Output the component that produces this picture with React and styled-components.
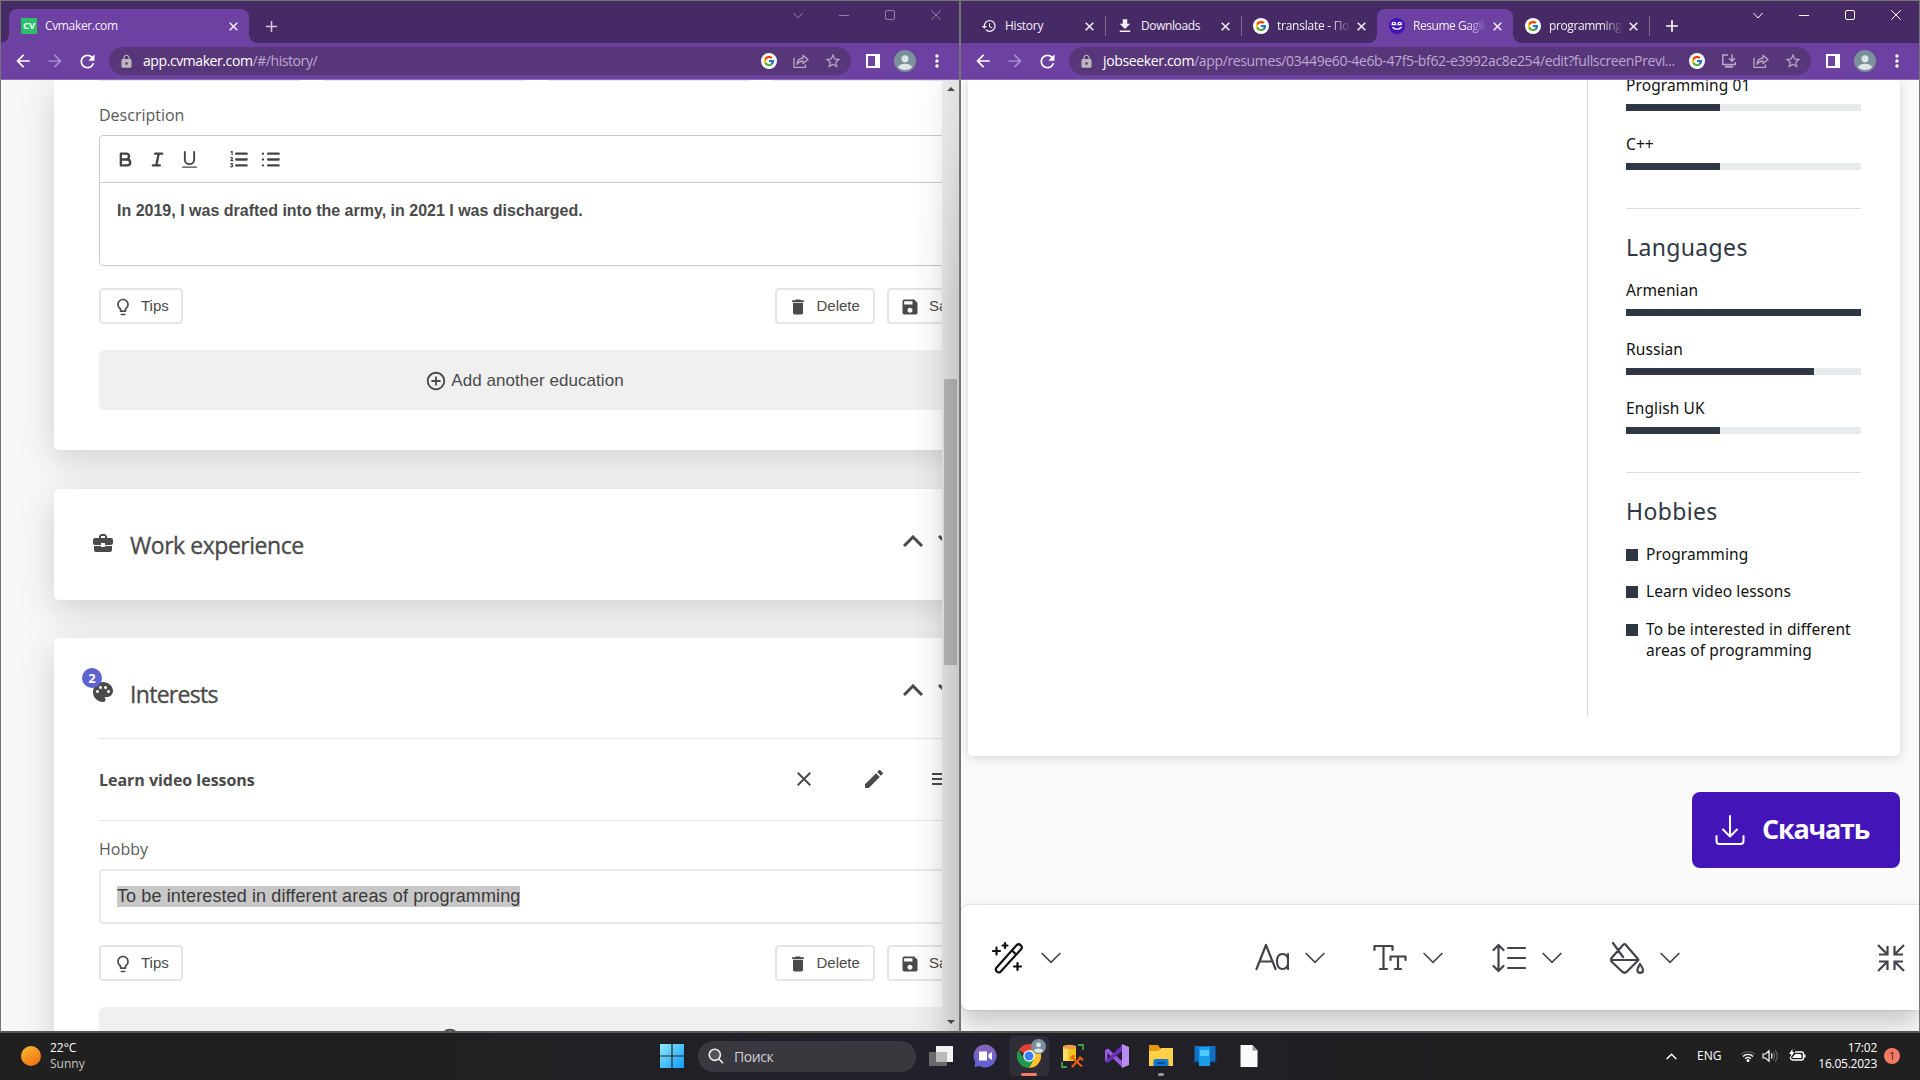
import React from "react";
import styled, { createGlobalStyle, css } from "styled-components";
import {
  MdArrowBack, MdArrowForward, MdRefresh, MdLock, MdStarBorder, MdClose, MdAdd, MdMoreVert,
  MdHistory, MdDownload, MdDelete, MdSave, MdEdit, MdPalette, MdMenu, MdBusinessCenter,
  MdLightbulbOutline, MdAddCircleOutline,
} from "react-icons/md";

const ui = `"Open Sans", "Noto Sans", sans-serif`;
const arial = `"Liberation Sans", Arial, sans-serif`;

const Global = createGlobalStyle`
  * { box-sizing: border-box; }
  body { margin: 0; background: #202020; overflow: hidden; font-family: ${ui}; }
  svg { display: block; flex: none; }
`;

const Desktop = styled.div`
  width: 1920px; height: 1080px; overflow: hidden;
  display: grid; grid-template: 1033px 47px / 960px 960px;
`;
const Window = styled.section`
  display: flex; flex-direction: column; overflow: hidden; min-width: 0;
  border: 1px solid #757575; border-bottom: 2px solid #555858;
`;

/* ---------- browser chrome ---------- */
const TabStrip = styled.header`
  display: flex; height: 42px; flex: none; background: #462a66; padding-left: 8px;
`;
const Tab = styled.div`
  position: relative; display: flex; align-items: center; width: ${p => p.$w || 136}px; height: 34px; margin-top: 8px;
  padding: 0 9px 0 12px; color: #f4eff8; background: ${p => (p.$active ? "#6d41a1" : "transparent")};
  border-radius: 8px 8px 0 0;
  ${p => p.$active && css`
    &::before, &::after { content: ""; position: absolute; bottom: 0; width: 8px; height: 8px; }
    &::before { left: -8px; background: radial-gradient(circle at 0 0, transparent 7.5px, #6d41a1 8px); }
    &::after { right: -8px; background: radial-gradient(circle at 100% 0, transparent 7.5px, #6d41a1 8px); }
  `}
  ${p => p.$sep && css`
    &::after { content: ""; position: absolute; right: -1px; top: 7px; width: 1px; height: 20px; background: #7d6893; }
  `}
`;
const TabIcon = styled.span`
  display: flex; align-items: center; justify-content: center; width: 16px; height: 16px; margin-right: 8px; flex: none;
`;
const TabTitle = styled.span`
  flex: 1; overflow: hidden; white-space: nowrap; font-size: 12px; line-height: 18px; letter-spacing: ${p => p.$ls || 0}px;
  ${p => p.$fade && css`mask-image: linear-gradient(90deg, #000 74%, rgba(0,0,0,.1) 100%);`}
`;
const CloseSlot = styled.span`
  display: flex; margin-left: 5px; width: 14px; justify-content: center; color: #efe9f5;
`;
const CvIcon = styled.span`
  width: 16px; height: 16px; background: #2dbe6c; color: #e9fff2; font: 700 9.5px/16px ${ui}; text-align: center;
`;
const NewTab = styled.span`
  display: flex; align-items: center; height: 34px; margin: 8px 0 0 13px; color: ${p => (p.$dim ? "#cfc4da" : "#fff")};
`;
const Controls = styled.div`
  display: flex; margin-left: auto; height: 28px; color: ${p => (p.$dim ? "#9280a6" : "#fff")};
`;
const Control = styled.span`
  display: flex; align-items: center; justify-content: center; width: 46px;
`;
const NavBar = styled.div`
  display: flex; align-items: center; height: 37px; flex: none; background: #6d41a1; border-bottom: 1px solid #8d68b7; color: #fff;
`;
const NavIcon = styled.span`
  display: flex; justify-content: center; width: 32px; color: ${p => (p.$dim ? "#a88bc9" : "#fff")};
  &:first-child { margin-left: 6px; }
`;
const Omnibox = styled.div`
  display: flex; align-items: center; width: 742px; height: 28px; margin-left: 6px; padding: 0 2px 0 10px;
  border-radius: 14px; background: #57377a;
`;
const Url = styled.div`
  flex: 1; padding-left: 9px; white-space: nowrap; overflow: hidden; font-size: 14px; line-height: 22px; color: #bda9d0;
  letter-spacing: ${p => p.$ls || 0}px;
  b { font-weight: 400; color: #fff; }
`;
const OmniIcon = styled.span`display: flex; justify-content: center; width: 32px; color: #b8a9c8;`;
const BarIcon = styled.span`display: flex; justify-content: center; width: 32px;`;
const BarEnd = styled.div`display: flex; align-items: center; margin-left: 6px;`;

const Google = ({ size = 16 }) => (
  <svg width={size} height={size} viewBox="0 0 16 16">
    <circle cx="8" cy="8" r="8" fill="#fff" />
    <g transform="translate(1.9 1.9) scale(.254)">
      <path fill="#FFC107" d="M43.6 20.1H42V20H24v8h11.3C33.7 32.7 29.2 36 24 36c-6.6 0-12-5.4-12-12s5.400-12 12-12c3.100 0 5.800 1.200 8 3l5.700-5.700C34 6.100 29.300 4 24 4 13 4 4 13 4 24s9 20 20 20 20-9 20-20c0-1.300-.1-2.600-.4-3.900z" />
      <path fill="#FF3D00" d="M6.300 14.700l6.600 4.800C14.700 15.100 19 12 24 12c3.100 0 5.800 1.200 8 3l5.700-5.700C34 6.100 29.300 4 24 4 16.300 4 9.700 8.300 6.300 14.700z" />
      <path fill="#4CAF50" d="M24 44c5.200 0 9.900-2 13.400-5.200l-6.200-5.200C29.200 35.100 26.700 36 24 36c-5.200 0-9.600-3.300-11.300-8l-6.500 5C9.500 39.600 16.200 44 24 44z" />
      <path fill="#1976D2" d="M43.600 20.100H42V20H24v8h11.300c-.8 2.200-2.200 4.200-4.100 5.600l6.200 5.200C37 39.200 44 34 44 24c0-1.300-.1-2.600-.4-3.900z" />
    </g>
  </svg>
);
const Smiley = () => (
  <svg width="16" height="16" viewBox="0 0 16 16" fill="none" stroke="#fff" strokeLinecap="round">
    <circle cx="8" cy="8" r="8" fill="#4314b8" stroke="none" />
    <path strokeWidth="1.300" d="M3.200 6.600V6a1.500 1.500 0 0 1 3.400 0v.6zM9 6.600V6a1.500 1.500 0 0 1 3.400 0v.6zM3.900 9.500c2 2.200 6.200 2.200 8.200 0" />
  </svg>
);
const Share = () => (
  <svg width="16" height="16" viewBox="0 0 16 16" fill="none" stroke="currentColor" strokeWidth="1.300">
    <path d="M1 5v9.300h11.500V11.500" /><path strokeLinejoin="round" d="M4 11.300C4.200 7.500 6.300 5.300 10 5.200V2.300L15 6.600 10 10.600V8C7.300 8 5.400 9 4 11.300z" />
  </svg>
);
const Install = () => (
  <svg width="16" height="16" viewBox="0 0 16 16" fill="none" stroke="currentColor" strokeWidth="1.500">
    <path d="M7 2H1.800v9.500h12.400V9" /><path strokeWidth="2" d="M4 13.700h8" /><path d="M11 1.500v6.500M8 5.200l3 3 3-3" />
  </svg>
);
const SidePanel = () => (
  <svg width="14" height="14" viewBox="0 0 14 14"><path fill="#fff" d="M0 0h14v14H0zM2 2v10h7V2z" fillRule="evenodd" /></svg>
);
const Avatar = ({ size = 22 }) => (
  <svg width={size} height={size} viewBox="0 0 22 22">
    <circle cx="11" cy="11" r="11" fill="#7a919c" /><circle cx="11" cy="8.700" r="3.500" fill="#dfe4e7" />
    <path fill="#dfe4e7" d="M4 17.500c1-5 13-5 14 0A11 11 0 0 1 4 17.500z" />
  </svg>
);
const WindowControls = ({ dim }) => (
  <Controls $dim={dim}>
    {["M.5 3l4.500 5 4.500-5", "M0 5.500h10", "M2 .5h6a1.500 1.500 0 0 1 1.500 1.500v6A1.500 1.500 0 0 1 8 9.500H2A1.500 1.500 0 0 1 .5 8V2A1.500 1.500 0 0 1 2 .5z", "M.3.3l9.400 9.400M9.700.3L.3 9.700"].map(d => (
      <Control key={d}><svg width="10" height="10" viewBox="0 0 10 10" fill="none" stroke="currentColor" overflow="visible"><path d={d} /></svg></Control>
    ))}
  </Controls>
);
const TabClose = () => (
  <CloseSlot><svg width="9" height="9" viewBox="0 0 9 9" stroke="currentColor" strokeWidth="1.600"><path d="M.7.7l7.600 7.600M8.300.7L.7 8.300" /></svg></CloseSlot>
);
const Address = ({ host, path, install, ls }) => (
  <NavBar>
    <NavIcon><MdArrowBack size={20} /></NavIcon>
    <NavIcon $dim><MdArrowForward size={20} /></NavIcon>
    <NavIcon><MdRefresh size={21} /></NavIcon>
    <Omnibox>
      <MdLock size={15} color="#b9b9bb" />
      <Url $ls={ls}><b>{host}</b>{path}</Url>
      <OmniIcon><Google /></OmniIcon>
      {install && <OmniIcon><Install /></OmniIcon>}
      <OmniIcon><Share /></OmniIcon>
      <OmniIcon><MdStarBorder size={18} /></OmniIcon>
    </Omnibox>
    <BarEnd>
      <BarIcon><SidePanel /></BarIcon><BarIcon><Avatar /></BarIcon><BarIcon><MdMoreVert size={20} /></BarIcon>
    </BarEnd>
  </NavBar>
);

/* ---------- CV editor ---------- */
const EditorView = styled.div`
  position: relative; display: flex; flex: 1; min-height: 0; background: #f8f8f8;
  &::after {
    content: ""; position: absolute; top: 0; right: 0; bottom: 0; width: 48px; pointer-events: none;
    background: linear-gradient(90deg, rgba(0,0,0,0), rgba(0,0,0,.03) 40%, rgba(0,0,0,.17));
    mask-image: linear-gradient(rgba(0,0,0,.35), #000 220px);
  }
`;
const Cards = styled.main`
  width: 941px; height: 951px; overflow: hidden; padding-left: 52.5px; display: flex; flex-direction: column; color: #4a4a4a;
`;
const Card = styled.article`
  position: relative; flex: none; width: 944px; height: ${p => p.$h}px; margin-top: ${p => p.$mt || 0}px; padding: 0 45.5px;
  background: #fff; border-radius: ${p => (p.$mt ? "5px" : "0 0 5px 5px")};
  box-shadow: 0 10px 36px rgba(38, 38, 48, .19);
`;
const Fields = styled.div`
  display: grid; grid-template-columns: repeat(4, 201px); column-gap: 24px; height: 1px;
`;
const FieldEdge = styled.span`background: #e6e6e6;`;
const Label = styled.div`
  height: 24px; line-height: 24px; margin: ${p => p.$mt}px 0 8px; font-size: 16px; color: #5a5a5a;
`;
const RichText = styled.div`height: 131px; border: 1px solid #c9c9c9; border-radius: 4px;`;
const RichTools = styled.div`
  display: flex; align-items: center; gap: 11px; height: 47px; padding-left: 15px; border-bottom: 1px solid #c9c9c9; color: #444;
  svg:nth-child(4) { margin-left: 17px; }
`;
const RichBody = styled.div`
  padding: 16px 17px; font: 700 ${p => p.$size}px/24px ${arial}; white-space: nowrap;
`;
const Actions = styled.div`
  display: flex; gap: 12px; height: 36px; width: 874px; margin-top: ${p => p.$mt}px;
`;
const Button = styled.button`
  display: flex; align-items: center; gap: ${p => p.$gap || 9}px; width: ${p => p.$w}px; height: 36px; padding: 0 0 0 ${p => p.$pl || 12}px;
  border: 2px solid #e5e5e5; border-radius: 4px; background: #fff; color: #4a4a4a;
  font: 15px/20px ${arial}; margin-right: ${p => (p.$push ? "auto" : 0)};
  svg { margin-top: 2px; }
  span { margin-top: -1px; }
`;
const AddButton = styled.button`
  display: flex; align-items: center; justify-content: center; gap: 4px; width: 851px; height: 60px; padding: 2px 0 0;
  border: 0; border-radius: 6px; background: #f0f0f0; color: #4a4a4a; font: 17px/24px ${arial}; letter-spacing: .06px;
`;
const AddBar = styled.div`width: 900px; height: 60px; margin-top: 26px; border-radius: 6px; background: #f0f0f0;`;
const CardHead = styled.div`
  display: flex; align-items: center; height: 100px; padding-top: 14px; margin-left: -8px;
  > svg { margin-top: -7px; }
`;
const CardTitle = styled.h2`
  flex: 1; margin: -3px 0 0 15px; font-size: 23px; line-height: 32px; font-weight: 400; letter-spacing: ${p => p.$ls}px;
  -webkit-text-stroke: .35px currentColor;
`;
const Chevrons = styled.div`display: flex; gap: 15px; width: 54px; margin: -11px -5px 0 0; flex: none;`;
const IconWithBadge = styled.div`position: relative; margin-top: -6px;`;
const Badge = styled.span`
  position: absolute; left: -9px; top: -12px; width: 20px; height: 20px; border-radius: 50%; background: #5f63d0; color: #fff;
  font-size: 13px; font-weight: 700; line-height: 20px; text-align: center;
`;
const ItemRow = styled.div`
  display: flex; align-items: center; height: 83px; width: 880px; border: solid #e6e6e6; border-width: 1px 0;
`;
const ItemName = styled.strong`flex: 1; font-size: 16px; letter-spacing: ${p => p.$ls}px;`;
const ItemIcon = styled.span`
  display: flex; justify-content: center; width: 70px; flex: none; margin-top: -2px;
  &:last-child { padding-right: 6px; }
`;
const Input = styled.div`
  display: flex; align-items: center; width: 853px; height: 55px; padding-left: 16px; border: 2px solid #e9e9e9; border-radius: 4px;
  font: 18px/21px ${arial};
  mark { color: #3a3a3a; background: #c8c8c8; letter-spacing: .11px; margin-top: -1px; }
`;
const ScrollTrack = styled.div`
  display: flex; flex-direction: column; align-items: center; width: 17px; background: #f1f1f1; padding-top: 7px;
`;
const Arrow = styled.span`
  width: 0; height: 0; border: 4px solid transparent;
  ${p => (p.$up ? "border-top: 0; border-bottom-color: #505050;" : "border-bottom: 0; border-top-color: #505050; margin-top: 355px;")}
`;
const Thumb = styled.span`width: 13px; height: 286px; margin-top: 288px; background: #c1c1c1;`;

const Chevron = ({ up }) => (
  <svg width="20" height="12" viewBox="0 0 20 12" fill="none" stroke="#4a4a4a" strokeWidth="3"><path d={up ? "M1 11l9-9 9 9" : "M1 1l9 9 9-9"} /></svg>
);
const Tool = ({ children }) => (
  <svg width="21" height="21" viewBox="0 0 18 18" fill="none" stroke="currentColor" strokeWidth="2" strokeLinejoin="round" strokeLinecap="round">{children}</svg>
);
const CardActions = ({ mt }) => (
  <Actions $mt={mt}>
    <Button $w={84} $push $gap={8}><MdLightbulbOutline size={20} /><span>Tips</span></Button>
    <Button $w={100} $pl={10.5}><MdDelete size={20} /><span>Delete</span></Button>
    <Button $w={86} $pl={11}><MdSave size={20} /><span>Save</span></Button>
  </Actions>
);

/* ---------- resume preview ---------- */
const PreviewView = styled.div`
  display: flex; flex-direction: column; flex: 1; min-height: 0; background: #fafafa; overflow: hidden;
`;
const Sheet = styled.div`
  flex: none; display: flex; width: 932px; height: 676px; margin-left: 7px; background: #fff; border-radius: 0 0 5px 5px;
  box-shadow: 0 2px 12px rgba(0, 0, 0, .15);
`;
const Side = styled.aside`
  width: 313px; height: 637px; margin-left: 619px; padding: 0 39px 0 38px; border-left: 1px solid #dedede;
  font-family: "Noto Sans", sans-serif; color: #111; overflow: hidden;
`;
const Skill = styled.div`
  height: 59px; font-size: 15.500px; letter-spacing: .1px; margin-top: ${p => p.$mt || 0}px;
`;
const SideGap = styled.div`height: 15px;`;
const SkillName = styled.div`height: 29px; line-height: 20px; white-space: nowrap;`;
const Meter = styled.div`height: 7px; width: 235px; background: #e9eaeb;`;
const Fill = styled.div`height: 7px; width: ${p => p.$v}%; background: #2f3744;`;
const SideTitle = styled.h3`
  margin: 0; height: 72px; padding-top: 22px; border-top: 1px solid #dedede; width: 235px;
  font-size: 23px; font-weight: 400; line-height: 32px; letter-spacing: .36px; color: #303844;
`;
const Hobby = styled.div`
  display: flex; gap: 8px; margin-bottom: 16px; font-size: 15.500px; line-height: 21px; letter-spacing: .1px; white-space: nowrap;
  &:last-child { margin-top: 17px; }
  &::before { content: ""; width: 12px; height: 12px; margin-top: 5px; background: #2f3744; flex: none; }
`;
const Download = styled.button`
  display: flex; align-items: center; align-self: flex-end; gap: 17px; flex: none; width: 208px; height: 76px; margin: 36px 19px 0 0; padding: 0 0 0 23px;
  border: 0; border-radius: 8px; background: #4314b8; color: #fff; font: 700 27px/36px ${ui}; letter-spacing: ${p => p.$ls}px;
  span { margin-top: -3px; }
`;
const StyleBar = styled.div`
  display: flex; align-items: center; flex: none; height: 105px; margin-top: 37px; padding: 0 14px 0 31px; background: #fff; color: #43434a;
  border-radius: 8px 0 0 8px; box-shadow: 0 0 2px rgba(0,0,0,.25), 0 14px 26px rgba(0,0,0,.2);
`;
const StyleTool = styled.div`
  display: flex; align-items: center; gap: 16px; width: ${p => p.$w || 118.300}px; flex: none;
  &:first-child { color: #111; gap: 17px; }
`;
const Collapse = styled.div`margin-left: auto;`;
const DownChevron = () => (
  <svg width="20" height="12" viewBox="0 0 20 12" fill="none" stroke="#43434a" strokeWidth="1.600"><path d="M.6 1l9.400 9.400L19.400 1" /></svg>
);
const LineIcon = ({ w = 34, children, sw = 2.2 }) => (
  <svg width={w} height="34" viewBox={`0 0 ${w} 34`} fill="none" stroke="currentColor" strokeWidth={sw} strokeLinecap="round" strokeLinejoin="round">{children}</svg>
);

/* ---------- taskbar ---------- */
const Taskbar = styled.footer`
  grid-column: 1 / 3; display: flex; align-items: center; height: 47px; padding-bottom: 1px; color: #fff;
  background: linear-gradient(90deg, #202020 0, #202020 400px, #22202b 900px, #202024 1300px, #202020 1500px);
`;
const Weather = styled.div`display: flex; align-items: center; gap: 9px; width: 640px; padding-left: 21px; font-size: 12px; line-height: 16px;`;
const Sun = styled.span`width: 20px; height: 20px; border-radius: 50%; background: linear-gradient(145deg, #f5bd35, #f2680c);`;
const Muted = styled.div`color: #c5c5c5;`;
const Stack = styled.div`text-align: ${p => p.$right ? "right" : "left"}; letter-spacing: ${p => p.$ls || 0}px;`;
const Search = styled.div`
  display: flex; align-items: center; gap: 10px; width: 218px; height: 31px; margin: 0 5px 0 -6px; padding-left: 10px; border-radius: 16px;
  background: #39383e; font-size: 14px; letter-spacing: ${p => p.$ls}px; color: #d0d0d2;
`;
const TaskApp = styled.span`
  position: relative; display: flex; align-items: center; justify-content: center; width: 40px; height: 40px; margin: 0 4px 0 0; border-radius: 5px;
  background: ${p => (p.$on ? "#2f2d37" : "transparent")};
  &::after {
    content: ""; position: absolute; bottom: 0; left: 50%; height: 3px; border-radius: 2px; transform: translateX(-50%);
    width: ${p => (p.$on ? 16 : p.$dot ? 6 : 0)}px; background: ${p => (p.$on ? "#f37b63" : "#9a9a9c")};
  }
`;
const Account = styled.span`position: absolute; right: 3px; top: 3px;`;
const Tray = styled.div`display: flex; align-items: center; margin-left: auto; padding-right: 20px; font-size: 12px; line-height: 16px;`;
const TrayItem = styled.span`display: flex; justify-content: center; width: ${p => p.$w}px;`;
const Notice = styled.span`
  width: 16px; height: 16px; margin-left: 7px; border-radius: 50%; background: #f37b63; color: #2a1a18; text-align: center; font-size: 10px;
`;

export default function App() {
  return (
    <Desktop>
      <Global />
      <Window>
        <TabStrip>
          <Tab $active $w={240}>
            <TabIcon><CvIcon>CV</CvIcon></TabIcon><TabTitle $ls={-0.35}>Cvmaker.com</TabTitle><TabClose />
          </Tab>
          <NewTab $dim><MdAdd size={19} /></NewTab>
          <WindowControls dim />
        </TabStrip>
        <Address host="app.cvmaker.com" path="/#/history/" ls={-0.42} />
        <EditorView>
          <Cards>
            <Card $h={370}>
              <Fields><FieldEdge /><FieldEdge /><FieldEdge /><FieldEdge /></Fields>
              <Label $mt={22}>Description</Label>
              <RichText>
                <RichTools>
                  <Tool><path d="M5 4h4.500a2.500 2.500 0 0 1 0 5H5zM5 9h5.500a2.500 2.500 0 0 1 0 5H5z" /></Tool>
                  <Tool><path d="M7 4h6M5 14h6M8 14l2-10" /></Tool>
                  <Tool><path strokeWidth="1.600" d="M5 2.500V9a4 4 0 0 0 8 0V2.500" /><path strokeWidth="1" d="M3 15.500h12" /></Tool>
                  <Tool><path d="M7 4h9M7 9h9M7 14h9" /><path strokeWidth="1" d="M2.500 2.500l1-.5v3M2.300 7.500c1.800-.8 2 .6.200 2.500h1.700M2.400 12.500h1.500l-.8 1.200c1.800.3.800 2-.8 1.400" /></Tool>
                  <Tool><path d="M7 4h9M7 9h9M7 14h9M2.500 4h.01M2.500 9h.01M2.500 14h.01" /></Tool>
                </RichTools>
                <RichBody $size={16}>In 2019, I was drafted into the army, in 2021 I was discharged.</RichBody>
              </RichText>
              <CardActions mt={22} />
              <AddBar><AddButton><MdAddCircleOutline size={22} />Add another education</AddButton></AddBar>
            </Card>
            <Card $h={111} $mt={39}>
              <CardHead>
                <MdBusinessCenter size={24} />
                <CardTitle $ls={-0.46}>Work experience</CardTitle>
                <Chevrons><Chevron up /><Chevron /></Chevrons>
              </CardHead>
            </Card>
            <Card $h={480} $mt={38}>
              <CardHead>
                <IconWithBadge><MdPalette size={24} /><Badge>2</Badge></IconWithBadge>
                <CardTitle $ls={-0.7}>Interests</CardTitle>
                <Chevrons><Chevron up /><Chevron /></Chevrons>
              </CardHead>
              <ItemRow>
                <ItemName $ls={-0.03}>Learn video lessons</ItemName>
                <ItemIcon><MdClose size={24} /></ItemIcon><ItemIcon><MdEdit size={24} /></ItemIcon><ItemIcon><MdMenu size={24} /></ItemIcon>
              </ItemRow>
              <Label $mt={16}>Hobby</Label>
              <Input><mark>To be interested in different areas of programming</mark></Input>
              <CardActions mt={21} />
              <AddBar><AddButton><MdAddCircleOutline size={22} />Add another hobby</AddButton></AddBar>
            </Card>
          </Cards>
          <ScrollTrack><Arrow $up /><Thumb /><Arrow /></ScrollTrack>
        </EditorView>
      </Window>

      <Window>
        <TabStrip>
          <Tab $sep><TabIcon><MdHistory size={16} /></TabIcon><TabTitle $ls={-0.25}>History</TabTitle><TabClose /></Tab>
          <Tab $sep><TabIcon><MdDownload size={18} /></TabIcon><TabTitle $ls={-0.4}>Downloads</TabTitle><TabClose /></Tab>
          <Tab><TabIcon><Google /></TabIcon><TabTitle $fade $ls={-0.25}>translate - По</TabTitle><TabClose /></Tab>
          <Tab $active><TabIcon><Smiley /></TabIcon><TabTitle $fade $ls={-0.45}>Resume Gagik</TabTitle><TabClose /></Tab>
          <Tab $sep><TabIcon><Google /></TabIcon><TabTitle $fade $ls={-0.4}>programming</TabTitle><TabClose /></Tab>
          <NewTab><MdAdd size={20} /></NewTab>
          <WindowControls />
        </TabStrip>
        <Address install host="jobseeker.com" path="/app/resumes/03449e60-4e6b-47f5-bf62-e3992ac8e254/edit?fullscreenPrevi..." ls={-0.355} />
        <PreviewView>
          <Sheet>
            <Side>
              <Skill $mt={-5}><SkillName>Programming 01</SkillName><Meter><Fill $v={40} /></Meter></Skill>
              <Skill><SkillName>C++</SkillName><Meter><Fill $v={40} /></Meter></Skill>
              <SideGap />
              <SideTitle>Languages</SideTitle>
              <Skill><SkillName>Armenian</SkillName><Meter><Fill $v={100} /></Meter></Skill>
              <Skill><SkillName>Russian</SkillName><Meter><Fill $v={80} /></Meter></Skill>
              <Skill><SkillName>English UK</SkillName><Meter><Fill $v={40} /></Meter></Skill>
              <SideGap />
              <SideTitle>Hobbies</SideTitle>
              <Hobby>Programming</Hobby>
              <Hobby>Learn video lessons</Hobby>
              <Hobby><div>To be interested in different<br />areas of programming</div></Hobby>
            </Side>
          </Sheet>
          <Download $ls={-1.25}>
            <svg width="30" height="32" viewBox="0 0 30 32" fill="none" stroke="#fff" strokeWidth="2" strokeLinecap="round" strokeLinejoin="round">
              <path d="M15 2v20M8 15.500l7 7 7-7M1.500 22v5a3 3 0 0 0 3 3h21a3 3 0 0 0 3-3v-5" />
            </svg>
            <span>Скачать</span>
          </Download>
          <StyleBar>
            <StyleTool $w={263}>
              <LineIcon w={32}>
                <path d="M4.200 27L24.500 4.300a3 3 0 0 1 4.300 4.200L8.300 31a3 3 0 0 1-4.100-4zM20 9.500l4.200 4" />
                <path d="M4.500 6.500v7M1 10h7M13 2v5M10.500 4.500h5M25.500 22v7M22 25.500h7" />
              </LineIcon>
              <DownChevron />
            </StyleTool>
            <StyleTool>
              <LineIcon><path d="M1.500 28L11 4l9.500 24M4.800 20.500h12.400" /><path d="M33 13v15M33 17.500c-1-3-3-4.500-5.500-4.500-3.500 0-5.500 3-5.500 7.500s2 7.500 5.500 7.500c2.500 0 4.500-1.500 5.500-4.500" /></LineIcon>
              <DownChevron />
            </StyleTool>
            <StyleTool>
              <LineIcon><path d="M1.500 9V5h18v4M10.500 5v23M7 28h7M17.500 19v-3.500h15V19M25 15.500V28M22 28h6" /></LineIcon>
              <DownChevron />
            </StyleTool>
            <StyleTool>
              <LineIcon><path d="M6.500 4v26M1.500 9l5-5 5 5M1.500 25l5 5 5-5M16 7h17M16 17h17M16 27h17" /></LineIcon>
              <DownChevron />
            </StyleTool>
            <StyleTool>
              <LineIcon><path d="M3 2l10 14M15 3L28 18c.5.5 0 1.500-.5 2L17 30.500c-1.500 1.500-3.500 1.500-5 0L2 21c-1.500-1.500-1.500-3 0-4.500L13 4c.7-.8 1.300-1 2-1zM1 19h26M30 23c2 3 3 4.500 3 6a2.800 2.800 0 0 1-5.600 0c0-1.500 1-3 2.600-6z" /></LineIcon>
              <DownChevron />
            </StyleTool>
            <Collapse>
              <svg width="28" height="28" viewBox="0 0 28 28" fill="none" stroke="currentColor" strokeWidth="2.200">
                <path d="M1 1l9 9M10.500 2v8.500H2M27 1l-9 9M17.500 2v8.500H26M1 27l9-9M10.500 26v-8.500H2M27 27l-9-9M17.500 26v-8.500H26" />
              </svg>
            </Collapse>
          </StyleBar>
        </PreviewView>
      </Window>

      <Taskbar>
        <Weather><Sun /><Stack>22°C<Muted>Sunny</Muted></Stack></Weather>
        <TrayItem $w={64}>
          <svg width="24" height="24" viewBox="0 0 24 24"><defs><linearGradient id="win" x2="1" y2="1"><stop stopColor="#8ceaff" /><stop offset="1" stopColor="#109bf5" /></linearGradient></defs><path fill="url(#win)" d="M0 0h11.400v11.400H0zM12.600 0H24v11.400H12.600zM0 12.600h11.400V24H0zM12.600 12.600H24V24H12.600z" /></svg>
        </TrayItem>
        <Search $ls={-0.4}>
          <svg width="16" height="16" viewBox="0 0 16 16" fill="none" stroke="#eee" strokeWidth="1.600"><circle cx="6.800" cy="6.800" r="5.600" fill="#555458" /><path d="M10.800 10.800L15 15.200" /></svg>
          Поиск
        </Search>
        <TaskApp><svg width="24" height="24" viewBox="0 0 24 24"><path fill="#f1f1f1" d="M7 2h17v16H7z" /><path fill="#777" fillOpacity=".85" d="M0 8h18v14H0z" /><path fill="#b9b9b9" d="M7 8h11v10H7z" /></svg></TaskApp>
        <TaskApp><svg width="24" height="24" viewBox="0 0 24 24"><defs><linearGradient id="chat" x2="0" y2="1"><stop stopColor="#8b63b8" /><stop offset="1" stopColor="#5b62d6" /></linearGradient></defs><path fill="url(#chat)" d="M12 .500a11.500 11.500 0 1 1-5.500 21.600L1.500 23l.8-5A11.500 11.500 0 0 1 12 .5z" /><path fill="#fff" d="M6 7.500h8v9H6zM15.500 10.500L19 8v8l-3.500-2.500z" /></svg></TaskApp>
        <TaskApp $on>
          <svg width="24" height="24" viewBox="0 0 24 24">
            <path fill="#de4333" d="M12 12L1.600 6A12 12 0 0 1 22.400 6z" /><path fill="#fbc42d" d="M12 12V6h10.400A12 12 0 0 1 12 24z" /><path fill="#229a4b" d="M1.600 6l5.200 9 5.200 3 5.200-3L12 24A12 12 0 0 1 1.600 6z" />
            <circle cx="12" cy="12" r="5.800" fill="#fff" /><circle cx="12" cy="12" r="4.500" fill="#367ff0" />
          </svg>
          <Account><Avatar size={15} /></Account>
        </TaskApp>
        <TaskApp><svg width="24" height="24" viewBox="0 0 24 24"><path fill="#f0c521" d="M2 2h13v15H2z" /><path fill="#f7dc66" d="M2 3h5v14H2z" /><ellipse cx="8.500" cy="3" rx="6.500" ry="2.300" fill="#ef9c4b" /><path fill="none" stroke="#43a047" strokeWidth="1.800" d="M17 1h5v5M1 18v5h5" /><path fill="none" stroke="#e8600c" strokeWidth="2.200" d="M11 23l9-10M11 13.500l10 9M9.500 14.500l4-3M18 13l4 3" /></svg></TaskApp>
        <TaskApp><svg width="24" height="24" viewBox="0 0 24 24"><path fill="#9a5be0" d="M0 6l3-1.500L18 18v6L2.500 9v7L0 17.500z" /><path fill="#6b2fb8" d="M0 17.500l3 1.500L18 6V0L2.500 15z" /><path fill="#b98cf2" d="M17 0l7 3v18l-7 3z" /></svg></TaskApp>
        <TaskApp $dot><svg width="24" height="24" viewBox="0 0 24 24"><path fill="#e19a12" d="M0 1h9l2 3v6H0z" /><path fill="#ffcf48" d="M0 7h9l3-3h12v18H0z" /><path fill="#1177d1" d="M4.500 22v-5a2 2 0 0 1 2-2h11a2 2 0 0 1 2 2v5z" /><path fill="#0a4d94" d="M8 18h8v2H8z" /></svg></TaskApp>
        <TaskApp><svg width="24" height="24" viewBox="0 0 24 24"><path fill="#116fc4" d="M1.500 2h21v15h-21z" /><path fill="#0b4a8e" d="M0 17h24v1.500H0z" /><path fill="#1b9be8" d="M6 3h11v19H6z" /><path fill="#4cc9f7" d="M7 6h9v6H7z" /></svg></TaskApp>
        <TaskApp><svg width="18" height="24" viewBox="0 0 18 24"><path fill="#fafafa" d="M.5 1h12l5 5.500V23H.5z" /><path fill="#999" d="M12.500 1v5.500h5z" /></svg></TaskApp>
        <Tray>
          <TrayItem $w={32}><svg width="11" height="7" viewBox="0 0 11 7" fill="none" stroke="#fff" strokeWidth="1.500"><path d="M.7 6l4.800-4.800L10.300 6" /></svg></TrayItem>
          <TrayItem $w={44}>ENG</TrayItem>
          <TrayItem $w={33}><svg width="16" height="12" viewBox="0 0 16 12" fill="none" stroke="#fff" strokeWidth="1.400"><path stroke="#555" d="M1 4.500a10 10 0 0 1 14 0" /><path d="M3 6.500a7 7 0 0 1 10 0M5.200 8.700a4 4 0 0 1 5.600 0" /><circle cx="8" cy="10.500" r=".8" fill="#fff" /></svg></TrayItem>
          <TrayItem $w={12}><svg width="16" height="14" viewBox="0 0 16 14" fill="none" stroke="#fff" strokeWidth="1.200"><path d="M1 5h2.500L7 1.800v10.400L3.500 9H1zM9 4.500a3.500 3.500 0 0 1 0 5" /><path stroke="#666" d="M11 3a6 6 0 0 1 0 8M13 1.200a8.500 8.500 0 0 1 0 11.600" /></svg></TrayItem>
          <TrayItem $w={42}><svg width="17" height="14" viewBox="0 0 17 14"><path fill="none" stroke="#fff" strokeWidth="1.300" d="M6 3h6.500a2 2 0 0 1 2 2v4a2 2 0 0 1-2 2h-9a2 2 0 0 1-2-2V7.500" /><path fill="#fff" d="M6.500 5H11q1.500 0 1.500 1.500V9H3.500V8zM15 5.500h1.500v3H15zM3.500 0L0 5h2v3l3.500-5h-2z" /></svg></TrayItem>
          <Stack $right $ls={-0.25}>17:02<div>16.05.2023</div></Stack>
          <Notice>1</Notice>
        </Tray>
      </Taskbar>
    </Desktop>
  );
}
